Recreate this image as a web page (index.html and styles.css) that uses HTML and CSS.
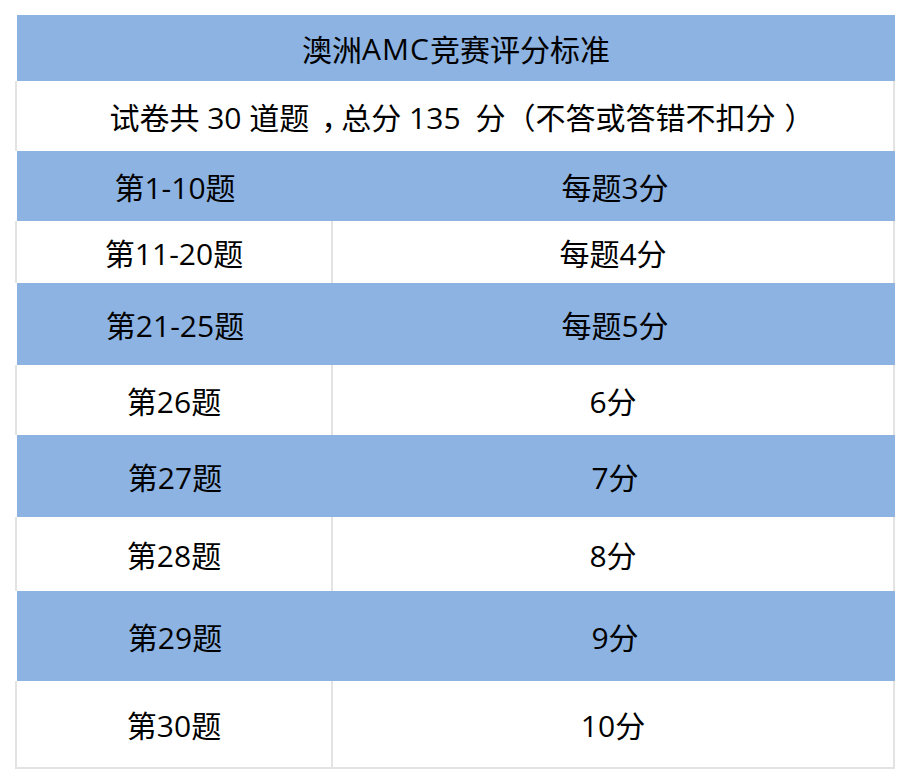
FILE: index.html
```html
<!DOCTYPE html>
<html lang="zh-CN">
<head>
<meta charset="utf-8">
<title>澳洲AMC竞赛评分标准</title>
<link rel="stylesheet" href="styles.css">
</head>
<body>
<div class="sheet">
  <div class="row blue h66"><div class="cell full">澳洲<span class="latin-wide">AMC</span>竞赛评分标准</div></div>
  <div class="row white h70"><div class="cell full">试卷共 30 道题<span class="punct comma">，</span>总分 135&ensp;分<span class="punct">（</span>不答或答错不扣分<span class="punct close">）</span></div></div>
  <div class="row blue h70"><div class="cell left">第1-10题</div><div class="cell right">每题3分</div></div>
  <div class="row white h62"><div class="cell left">第11-20题</div><div class="cell right">每题4分</div></div>
  <div class="row blue h82"><div class="cell left">第21-25题</div><div class="cell right">每题5分</div></div>
  <div class="row white h70"><div class="cell left">第26题</div><div class="cell right">6分</div></div>
  <div class="row blue h82"><div class="cell left">第27题</div><div class="cell right">7分</div></div>
  <div class="row white h74"><div class="cell left">第28题</div><div class="cell right">8分</div></div>
  <div class="row blue h90"><div class="cell left">第29题</div><div class="cell right">9分</div></div>
  <div class="row white h86 last"><div class="cell left">第30题</div><div class="cell right">10分</div></div>
</div>
</body>
</html>
```
FILE: styles.css
```css
html, body {
  margin: 0;
  padding: 0;
  background: #ffffff;
}
body {
  font-family: "Open Sans", "Noto Sans CJK SC", sans-serif;
  color: #000000;
}
.sheet {
  margin: 15px 0 0 15px;
  width: 880px;
  display: flex;
  flex-direction: column;
}
.row {
  display: flex;
  box-sizing: border-box;
  font-size: 30px;
}
.row.blue {
  background: #8db3e2;
  margin-left: 2px;
}
.row.white {
  background: #ffffff;
  border-left: 2px solid #e3e3e3;
  border-right: 2px solid #e3e3e3;
}
.row.last {
  border-bottom: 2px solid #e3e3e3;
}
.cell {
  display: flex;
  align-items: center;
  justify-content: center;
  box-sizing: border-box;
  white-space: pre;
}
.punct {
  font-family: "Noto Sans CJK SC", sans-serif;
}
.punct.comma {
  margin-left: 12px;
  letter-spacing: -10px;
}
.punct.close {
  margin-left: 9px;
  letter-spacing: -14px;
}
.latin-wide {
  letter-spacing: 1px;
}
.full { flex: 1; }
.left { width: 316px; }
.right { flex: 1; }
.white .left { border-right: 2px solid #e3e3e3; }
.blue .left { margin-right: 2px; }
.h62 { height: 62px; }
.h66 { height: 66px; }
.h70 { height: 70px; }
.h74 { height: 74px; }
.h82 { height: 82px; }
.h86 { height: 88px; }
.h90 { height: 90px; }
```
